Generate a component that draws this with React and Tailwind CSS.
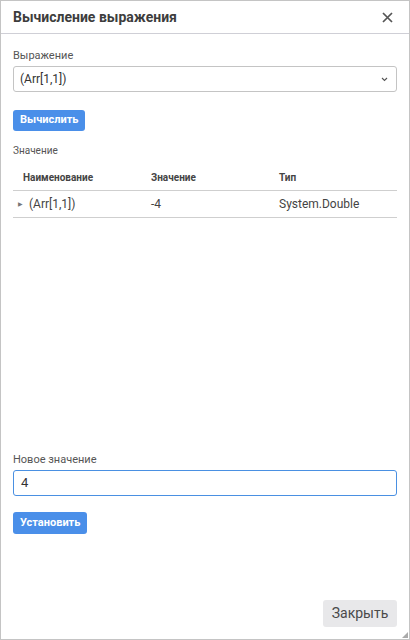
import React from "react";

const font = { fontFamily: "Roboto, 'Noto Sans', sans-serif" };

export default function App() {
  return (
    <div
      style={font}
      className="relative w-[410px] h-[640px] bg-white border border-[#c4c4c4] flex flex-col text-[#333]"
    >
      {/* Header */}
      <div className="h-[33px] shrink-0 border-b border-[#cfcfd6] pl-[12px] pr-[16px] flex items-center justify-between">
        <span className="text-[14px] font-bold text-[#3d3d3d]">Вычисление выражения</span>
        <svg width="11" height="11" viewBox="0 0 11 11" className="text-[#555]">
          <path d="M1 1L10 10M10 1L1 10" stroke="currentColor" strokeWidth="1.7" />
        </svg>
      </div>

      {/* Body */}
      <div className="flex-1 flex flex-col px-[12px]">
        <div className="mt-[15px] text-[11px] leading-[14px] text-[#555]">Выражение</div>
        <div className="mt-[3px] h-[26px] border border-[#c4c4c4] rounded-[3px] flex items-center justify-between pl-[6px] pr-[8px]">
          <span className="text-[12px] text-[#333]">(Arr[1,1])</span>
          <svg width="7" height="5" viewBox="0 0 7 5" className="text-[#555]">
            <path d="M1 1L3.5 3.5L6 1" stroke="currentColor" strokeWidth="1.1" fill="none" />
          </svg>
        </div>
        <div className="mt-[14px]">
          <button className="h-[21px] px-[7px] rounded-[3px] bg-[#4a8fe9] text-white text-[11px] font-bold">
            Вычислить
          </button>
        </div>

        <div className="mt-[13px] text-[10px] leading-[13px] text-[#555]">Значение</div>

        {/* Table */}
        <div className="mt-[8px]">
          <div className="h-[26px] grid grid-cols-3 items-center border-b border-[#cfcfcf] text-[10px] font-bold text-[#444]">
            <span className="pl-[10px]">Наименование</span>
            <span className="pl-[10px]">Значение</span>
            <span className="pl-[10px]">Тип</span>
          </div>
          <div className="h-[27px] grid grid-cols-3 items-center border-b border-[#cfcfcf] text-[12px] text-[#444]">
            <span className="pl-[5px] flex items-center">
              <span className="text-[6px] text-[#777] mr-[6px]">▶</span>
              (Arr[1,1])
            </span>
            <span className="pl-[10px]">-4</span>
            <span className="pl-[10px]">System.Double</span>
          </div>
        </div>

        <div className="flex-1" />

        <div className="text-[11px] leading-[14px] text-[#555]">Новое значение</div>
        <div className="mt-[3px] h-[26px] border border-[#4a90e2] rounded-[3px] flex items-center pl-[7px]">
          <span className="text-[13px] text-[#333]">4</span>
        </div>
        <div className="mt-[13px]">
          <button className="h-[22px] px-[7px] rounded-[3px] bg-[#4a8fe9] text-white text-[11px] font-bold">
            Установить
          </button>
        </div>

        <div className="mt-[66px] mb-[12px] flex justify-end">
          <button className="h-[27px] w-[74px] rounded-[3px] bg-[#e8e8ea] text-[#4a4a4a] text-[14px]">
            Закрыть
          </button>
        </div>
      </div>

      {/* Resize grip */}
      <svg width="6" height="6" viewBox="0 0 6 6" className="absolute right-[1px] bottom-[1px] text-[#aaa]">
        <path d="M6 0L6 6L0 6Z" fill="currentColor" />
      </svg>
    </div>
  );
}
